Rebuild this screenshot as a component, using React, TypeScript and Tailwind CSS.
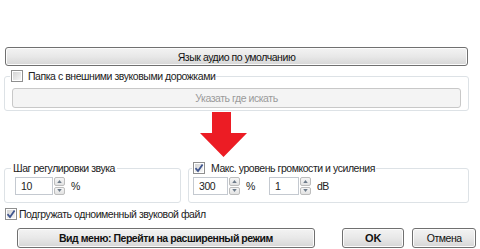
import React from "react";

const font = { fontFamily: "'Liberation Sans', Arial, sans-serif" };

function CheckBox({ checked }: { checked?: boolean }) {
  return (
    <span className="relative inline-flex h-[12px] w-[12px] shrink-0 items-center justify-center border border-[#8f8f8f] bg-white">
      <span className="absolute inset-[1px] bg-gradient-to-br from-[#d4d4d4] to-[#f6f6f6]" />
      {checked && (
        <svg viewBox="0 0 10 10" className="relative h-[10px] w-[10px]">
          <path d="M1.5 5.2 L4 8 L8.6 1.5" fill="none" stroke="#40568f" strokeWidth="1.8" />
        </svg>
      )}
    </span>
  );
}

function Spin({ value, width, unit }: { value: string; width: string; unit: string }) {
  return (
    <div className="flex items-center">
      <div className={`flex h-[18px] items-center border border-[#c4c9d0] bg-white pl-[5px] text-[#222] ${width}`}>
        {value}
      </div>
      <div className="ml-[1px] flex h-[18px] w-[11px] flex-col gap-[1px]">
        <div className="flex flex-1 items-center justify-center rounded-[2px] border border-[#bdbdbd] bg-gradient-to-b from-[#f6f6f6] to-[#e2e2e2]">
          <svg viewBox="0 0 6 4" className="h-[3px] w-[5px]">
            <path d="M0 4 L3 0 L6 4 Z" fill="#6d7b8a" />
          </svg>
        </div>
        <div className="flex flex-1 items-center justify-center rounded-[2px] border border-[#bdbdbd] bg-gradient-to-b from-[#f6f6f6] to-[#e2e2e2]">
          <svg viewBox="0 0 6 4" className="h-[3px] w-[5px]">
            <path d="M0 0 L3 4 L6 0 Z" fill="#6d7b8a" />
          </svg>
        </div>
      </div>
      <span className="ml-[6px] leading-[12px] text-[#222]">{unit}</span>
    </div>
  );
}

function WinButton({ children, className }: { children: React.ReactNode; className: string }) {
  return (
    <button
      type="button"
      className={`flex items-center justify-center rounded-[3px] border border-[#707070] bg-gradient-to-b from-[#f3f3f3] via-[#e8e8e8] to-[#d6d6d6] leading-[12px] tracking-[-0.45px] text-[#111] shadow-[inset_0_0_0_1px_#fcfcfc] ${className}`}
    >
      {children}
    </button>
  );
}

export default function App() {
  return (
    <div
      className="relative h-[249px] w-[480px] overflow-hidden bg-white px-[4px] pt-[47px] text-[10.5px] leading-[12px] tracking-[-0.45px]"
      style={font}
    >
      <WinButton className="ml-[1px] h-[19px] w-[463px] from-[#ebebeb] to-[#cfcfcf] border-[#8a8a8a]">
        Язык аудио по умолчанию
      </WinButton>

      <fieldset className="mt-[4px] w-[465px] rounded-[3px] border border-[#dde2e6] px-[7px] pb-[2px] pt-[6px]">
        <legend className="ml-[-2px] flex h-[12px] items-center gap-[5px] px-[1px] text-[#222]">
          <CheckBox />
          Папка с внешними звуковыми дорожками
        </legend>
        <div className="flex h-[20px] w-[449px] items-center justify-center rounded-[3px] border border-[#c8c8c8] bg-[#f4f4f4] text-[#9a9a9a]">
          Указать где искать
        </div>
      </fieldset>

      <div className="mt-[51px] flex gap-[7px]">
        <fieldset className="w-[177px] rounded-[3px] border border-[#dde2e6] px-[10px] pb-[7px] pt-[3px]">
          <legend className="ml-[-4px] h-[12px] px-[2px] text-[#222]">Шаг регулировки звука</legend>
          <Spin value="10" width="w-[38px]" unit="%" />
        </fieldset>
        <fieldset className="w-[281px] rounded-[3px] border border-[#dde2e6] px-[4px] pb-[7px] pt-[3px]">
          <legend className="ml-[-1px] flex h-[12px] items-center gap-[6px] px-[1px] text-[#222]">
            <CheckBox checked />
            Макс. уровень громкости и усиления
          </legend>
          <div className="flex gap-[14px]">
            <Spin value="300" width="w-[35px]" unit="%" />
            <Spin value="1" width="w-[30px]" unit="dB" />
          </div>
        </fieldset>
      </div>

      <div className="mt-[5px] flex h-[12px] items-center gap-[2px] pl-[1px] text-[#222]">
        <CheckBox checked />
        Подгружать одноименный звуковой файл
      </div>

      <div className="mt-[8px] flex">
        <WinButton className="ml-[13px] h-[20px] w-[300px] font-bold">Вид меню: Перейти на расширенный режим</WinButton>
        <WinButton className="ml-[27px] h-[20px] w-[63px] text-[11px] font-bold tracking-[0px]">OK</WinButton>
        <WinButton className="ml-[8px] h-[20px] w-[64px]">Отмена</WinButton>
      </div>

      <svg viewBox="0 0 48 46" className="absolute left-[200px] top-[112px] h-[46px] w-[48px]">
        <path d="M12 0 H31 V21 H47 L23.5 45 L0 21 H12 Z" fill="#ec1c24" />
      </svg>
    </div>
  );
}
